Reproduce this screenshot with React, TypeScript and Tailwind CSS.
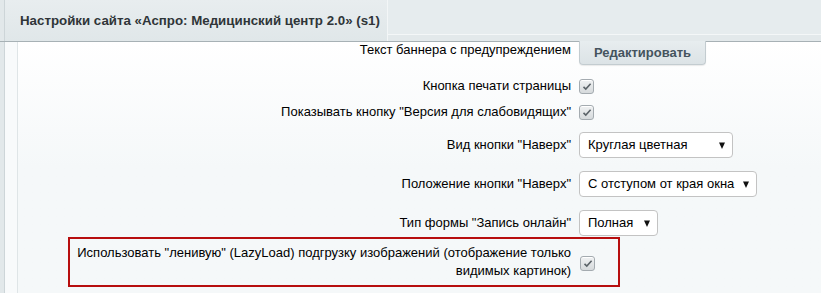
import React from "react";

const font = { fontFamily: '"Liberation Sans", Arial, sans-serif' };

function Check() {
  return (
    <span className="inline-flex h-[15px] w-[15px] items-center justify-center rounded-[3px] border border-[#a4abb0] bg-gradient-to-b from-[#f0f2f3] to-[#d6dadc] shadow-[inset_0_1px_0_#fff]">
      <svg width="10" height="9" viewBox="0 0 10 9">
        <path d="M1.5 4.8 L3.8 7 L8.6 1.8" fill="none" stroke="#5b6368" strokeWidth="1.6" />
      </svg>
    </span>
  );
}

function Select({ text, w }: { text: string; w: string }) {
  return (
    <div className={`flex h-[26px] ${w} items-center justify-between rounded-[4px] border border-[#c3c3c3] bg-white pl-[8px] pr-[7px] text-[13px] text-black`}>
      <span>{text}</span>
      <svg width="6" height="7" viewBox="0 0 6 7">
        <path d="M0 0.5 L6 0.5 L3 7 Z" fill="#111" />
      </svg>
    </div>
  );
}

function Row({ label, children, cls }: { label: string; children: React.ReactNode; cls: string }) {
  return (
    <div className={`flex items-center ${cls}`}>
      <div className="w-[553px] text-right text-[13px] leading-[16px] text-black">{label}</div>
      <div className="ml-[8px] flex items-center">{children}</div>
    </div>
  );
}

export default function App() {
  return (
    <div style={font} className="h-[293px] w-[821px] overflow-hidden bg-[#e4eaec]">
      {/* header */}
      <div className="flex h-[42px] border-b border-[#a7b1b5]">
        <div className="w-[5px] border-r border-[#cdd5d8] bg-[#e2e8ea]" />
        <div className="flex w-[383px] items-center border-r border-[#f3f6f7] bg-gradient-to-b from-[#e8edef] to-[#e0e7e9] pl-[15px] text-[13.3px] font-bold text-[#2f3538]">
          Настройки сайта «Аспро: Медицинский центр 2.0» (s1)
        </div>
        <div className="flex flex-1 flex-col">
          <div className="h-[35px] border-b border-[#f4f7f8] bg-[#e6ecee]" />
          <div className="flex-1 bg-[#e3e9eb]" />
        </div>
      </div>
      {/* body */}
      <div className="flex h-[251px]">
        <div className="w-[5px] border-r border-[#cdd5d8] bg-[#e2e8ea]" />
        <div className="w-[13px] border-r border-[#dfe5e7] bg-[#f8fafb]" />
        <div className="flex-1 bg-gradient-to-b from-[#ffffff] via-[#f5f8f9] to-[#f5f8f9]">
          <div className="flex items-start">
            <div className="w-[553px] text-right text-[13px] leading-[16px] text-black">Текст баннера с предупреждением</div>
            <div className="ml-[8px] -mt-[1px] flex h-[24px] w-[127px] items-center justify-center rounded-b-[4px] border border-t-0 border-[#c3ccd0] bg-gradient-to-b from-[#e7edef] to-[#dce3e6] text-[13px] font-bold text-[#45545e] shadow-[0_1px_1px_rgba(0,0,0,0.08)]">
              Редактировать
            </div>
          </div>
          <Row label="Кнопка печати страницы" cls="mt-[9px] h-[24px]">
            <Check />
          </Row>
          <Row label={'Показывать кнопку "Версия для слабовидящих"'} cls="mt-[2px] h-[24px]">
            <Check />
          </Row>
          <Row label={'Вид кнопки "Наверх"'} cls="mt-[8px] h-[26px]">
            <Select text="Круглая цветная" w="w-[154px]" />
          </Row>
          <Row label={'Положение кнопки "Наверх"'} cls="mt-[13px] h-[26px]">
            <Select text="С отступом от края окна" w="w-[178px]" />
          </Row>
          <Row label={'Тип формы "Запись онлайн"'} cls="mt-[13px] h-[26px]">
            <Select text="Полная" w="w-[79px]" />
          </Row>
          <div className="ml-[50px] mt-[1px] flex h-[50px] w-[552px] items-center border-2 border-[#b70e0e] pl-[7px]">
            <div className="w-[494px] text-right text-[13px] leading-[18px] text-black">
              Использовать "ленивую" (LazyLoad) подгрузку изображений (отображение только видимых картинок)
            </div>
            <div className="ml-[9px] mt-[3px] flex">
              <Check />
            </div>
          </div>
        </div>
      </div>
    </div>
  );
}
